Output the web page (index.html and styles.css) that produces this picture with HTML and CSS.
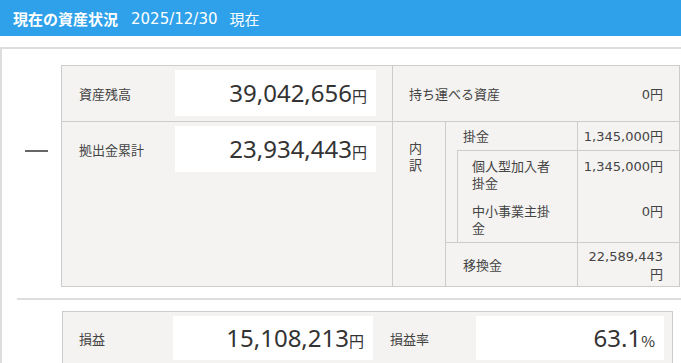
FILE: index.html
```html
<!DOCTYPE html>
<html lang="ja">
<head>
<meta charset="utf-8">
<title>現在の資産状況</title>
<link rel="stylesheet" href="styles.css">
</head>
<body>
<header class="topbar">
  <h1 class="topbar-title">現在の資産状況</h1>
  <span class="topbar-date">2025/12/30</span>
  <span class="topbar-note">現在</span>
</header>

<main class="panel">
  <div class="calc">
    <div class="op"><span class="op-minus"></span></div>

    <section class="summary">
      <div class="kv kv-first">
        <div class="kv-label">資産残高</div>
        <div class="kv-box"><span class="amount"><span class="num">39,042,656</span><span class="unit">円</span></span></div>
      </div>
      <div class="side-top">
        <span>持ち運べる資産</span>
        <span class="small-amount">0<span class="yen">円</span></span>
      </div>

      <div class="kv">
        <div class="kv-label">拠出金累計</div>
        <div class="kv-box"><span class="amount"><span class="num">23,934,443</span><span class="unit">円</span></span></div>
      </div>
      <div class="breakdown">
        <div class="bd-head">内訳</div>
        <div class="bd-main bd-r1">掛金</div>
        <div class="bd-val bd-r1">1,345,000<span class="yen">円</span></div>
        <div class="bd-sub bd-r2 bd-sub-first">個人型加入者掛金</div>
        <div class="bd-val bd-r2 bd-sub-first">1,345,000<span class="yen">円</span></div>
        <div class="bd-sub bd-r3">中小事業主掛金</div>
        <div class="bd-val bd-r3">0<span class="yen">円</span></div>
        <div class="bd-main bd-r4 bd-transfer">移換金</div>
        <div class="bd-val bd-r4 bd-transfer-val">22,589,443<span class="yen">円</span></div>
      </div>
    </section>
  </div>

  <div class="divider"></div>

  <section class="result">
    <div class="res-label">損益</div>
    <div class="res-box"><span class="amount"><span class="num">15,108,213</span><span class="unit">円</span></span></div>
    <div class="res-label res-label-rate">損益率</div>
    <div class="res-box"><span class="amount"><span class="num">63.1</span><span class="unit">%</span></span></div>
  </section>
</main>
</body>
</html>
```

FILE: styles.css
```css
* {
  box-sizing: border-box;
  margin: 0;
  padding: 0;
}

html,
body {
  overflow: hidden;
  background: #fff;
}

body {
  font-family: "DejaVu Sans", "Noto Sans CJK JP", sans-serif;
  font-size: 13px;
  line-height: 17px;
  color: #333;
}

/* title bar */
.topbar {
  height: 36px;
  background: #2ea1ea;
  color: #fff;
  display: flex;
  align-items: center;
  padding: 2px 0 0 13px;
  white-space: nowrap;
}

.topbar-title {
  font-family: "Noto Sans CJK JP", sans-serif;
  font-weight: 700;
  font-size: 15px;
  line-height: 20px;
}

.topbar-date {
  margin-left: 13px;
  font-size: 15px;
  line-height: 20px;
}

.topbar-note {
  margin-left: 12px;
  font-family: "Noto Sans CJK JP", sans-serif;
  font-size: 15px;
  line-height: 20px;
}

/* outer panel: open on the right, it continues past the window */
.panel {
  margin-top: 11px;
  border-top: 2px solid #ddd;
  border-left: 2px solid #ddd;
  padding: 16px 0 0 15px;
}

.calc {
  display: flex;
}

.op {
  flex: none;
  width: 44px;
  padding-top: 85px;
}

.op-minus {
  display: block;
  width: 23px;
  height: 2px;
  margin-left: 8px;
  background: #666;
}

/* balance summary */
.summary {
  flex: none;
  display: grid;
  grid-template-columns: 330px 287px;
  border: 1px solid #ccc;
  background: #f4f3f1;
}

.kv {
  display: flex;
  align-items: flex-start;
  padding: 4px 16px 5px 0;
}

.kv-first {
  border-bottom: 1px solid #ccc;
}

.kv-label {
  width: 113px;
  height: 46px;
  padding-left: 17px;
  display: flex;
  align-items: center;
  font-family: "Noto Sans CJK JP", sans-serif;
  color: #444;
}

.kv-box,
.res-box {
  background: #fff;
  display: flex;
  align-items: center;
  justify-content: flex-end;
  padding-right: 9px;
}

.kv-box {
  width: 201px;
  height: 46px;
}

.amount {
  white-space: nowrap;
}

.num {
  font-family: "Noto Sans", sans-serif;
  font-size: 24px;
  line-height: 28px;
  color: #333;
}

.unit {
  font-family: "Noto Sans CJK JP", sans-serif;
  font-size: 15px;
  color: #333;
}

.yen {
  font-family: "Noto Sans CJK JP", sans-serif;
}

.side-top {
  border-left: 1px solid #ccc;
  border-bottom: 1px solid #ccc;
  display: flex;
  align-items: center;
  justify-content: space-between;
  padding: 0 16px;
  color: #444;
}

.side-top > span:first-child {
  font-family: "Noto Sans CJK JP", sans-serif;
}

/* breakdown of contributions */
.breakdown {
  border-left: 1px solid #ccc;
  display: grid;
  grid-template-columns: 53px 11px 120px 102px;
  color: #444;
}

.bd-head {
  grid-column: 1;
  grid-row: 1 / 5;
  border-right: 1px solid #ccc;
  padding: 17px 14px 0 16px;
  font-family: "Noto Sans CJK JP", sans-serif;
}

.bd-main {
  grid-column: 2 / 4;
  padding: 5px 0 5px 17px;
  font-family: "Noto Sans CJK JP", sans-serif;
}

.bd-sub {
  grid-column: 3;
  border-left: 1px solid #ccc;
  padding: 6px 17px 6px 14px;
  font-family: "Noto Sans CJK JP", sans-serif;
}

.bd-val {
  grid-column: 4;
  border-left: 1px solid #ccc;
  padding: 5px 16px 5px 3px;
  text-align: right;
}

.bd-r1 { grid-row: 1; }
.bd-r2 { grid-row: 2; }
.bd-r3 { grid-row: 3; }
.bd-r4 { grid-row: 4; }

.bd-sub.bd-r2,
.bd-val.bd-r2 {
  padding-bottom: 5px;
}

.bd-val.bd-r2,
.bd-val.bd-r3 {
  padding-top: 6px;
}

.bd-sub-first {
  border-top: 1px solid #ccc;
}

.bd-transfer {
  border-top: 1px solid #ccc;
  display: flex;
  align-items: center;
}

.bd-transfer-val {
  border-top: 1px solid #ccc;
  padding-top: 5px;
  padding-bottom: 3px;
}

/* divider between the calculation and the result */
.divider {
  margin-top: 11px;
  height: 2px;
  background: #ddd;
}

/* profit / loss */
.result {
  margin: 11px 0 0 45px;
  width: 611px;
  display: grid;
  grid-template-columns: 110px 200px 103px 188px;
  padding: 4px 8px 4px 0;
  border: 1px solid #ccc;
  background: #f4f3f1;
}

.res-label {
  padding-left: 16px;
  display: flex;
  align-items: center;
  font-family: "Noto Sans CJK JP", sans-serif;
  color: #444;
}

.res-label-rate {
  padding-left: 17px;
}

.res-box {
  height: 44px;
}
```
